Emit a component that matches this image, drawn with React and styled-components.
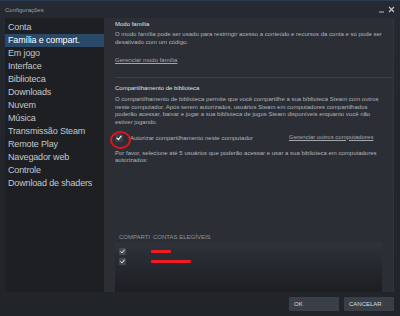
import React from 'react';
import styled, { createGlobalStyle } from 'styled-components';

const GlobalStyle = createGlobalStyle`
  html, body {
    margin: 0;
    padding: 0;
    background: #202328;
  }
  * {
    box-sizing: border-box;
  }
`;

const menu = [
    'Conta',
    'Família e compart.',
    'Em jogo',
    'Interface',
    'Biblioteca',
    'Downloads',
    'Nuvem',
    'Música',
    'Transmissão Steam',
    'Remote Play',
    'Navegador web',
    'Controle',
    'Download de shaders',
];

const accounts = [
    { id: 1, width: 20 },
    { id: 2, width: 40 },
];

const Check = ({ size = 6 }) => (
    <svg width={size} height={size} viewBox="0 0 10 10">
        <path d="M1.5 5.2 L4 7.8 L8.6 2" fill="none" stroke="#f2f2f2" strokeWidth="2" strokeLinecap="round" strokeLinejoin="round" />
    </svg>
);

const App = () => {
    return (
        <>
            <GlobalStyle />
            <Window>
                <TitleBar>
                    <Title>Configurações</Title>
                    <Controls>
                        <svg width="7" height="7" viewBox="0 0 7 7">
                            <path d="M1 6 H6" stroke="#b9bdc2" strokeWidth="1" />
                        </svg>
                        <svg width="7" height="7" viewBox="0 0 7 7">
                            <path d="M1 1 L6 6 M6 1 L1 6" stroke="#c4c8cc" strokeWidth="1.1" />
                        </svg>
                    </Controls>
                </TitleBar>
                <Body>
                    <Sidebar>
                        {menu.map((label, i) => (
                            <NavItem key={label} $active={i === 1}>{label}</NavItem>
                        ))}
                    </Sidebar>
                    <Content>
                        <Heading>Modo família</Heading>
                        <Paragraph $top={3}>
                            O modo família pode ser usado para restringir acesso a conteúdo e recursos da conta e só pode ser<br />
                            desativado com um código.
                        </Paragraph>
                        <LinkText $top={10}>Gerenciar modo família</LinkText>
                        <Divider />
                        <Heading $top={6}>Compartilhamento de biblioteca</Heading>
                        <Paragraph $top={4}>
                            O compartilhamento de biblioteca permite que você compartilhe a sua biblioteca Steam com outros<br />
                            neste computador. Após serem autorizados, usuários Steam em computadores compartilhados<br />
                            poderão acessar, baixar e jogar a sua biblioteca de jogos Steam disponíveis enquanto você não<br />
                            estiver jogando.
                        </Paragraph>
                        <AuthRow>
                            <Marked>
                                <CheckBox $size={8}><Check size={6} /></CheckBox>
                            </Marked>
                            <AuthLabel>Autorizar compartilhamento neste computador</AuthLabel>
                            <LinkText>Gerenciar outros computadores</LinkText>
                        </AuthRow>
                        <Paragraph $top={7}>
                            Por favor, selecione até 5 usuários que poderão acessar e usar a sua biblioteca em computadores<br />
                            autorizados:
                        </Paragraph>
                        <Spacer />
                        <ListHeader>
                            <ColShare $w={34}>Comparti</ColShare>
                            <span>Contas elegíveis</span>
                        </ListHeader>
                        <ListBox>
                            {accounts.map((acc) => (
                                <ListRow key={acc.id}>
                                    <ColShare $w={32}>
                                        <CheckBox $size={7} $light><Check size={5} /></CheckBox>
                                    </ColShare>
                                    <Redacted style={{ width: acc.width }} />
                                </ListRow>
                            ))}
                        </ListBox>
                    </Content>
                </Body>
                <Footer>
                    <Button>OK</Button>
                    <Button>CANCELAR</Button>
                </Footer>
            </Window>
        </>
    );
};

const Window = styled.div`
  width: 400px;
  height: 316px;
  display: flex;
  flex-direction: column;
  background: linear-gradient(180deg, #252a33 0%, #23262c 30%, #212428 100%);
  border-top: 1px solid #2a3a52;
  font-family: "Liberation Sans", Arial, sans-serif;
  overflow: hidden;
`;

const TitleBar = styled.div`
  height: 17px;
  display: flex;
  align-items: center;
  justify-content: space-between;
  padding: 0 5px 0 5px;
`;

const Title = styled.span`
  font-size: 6px;
  color: #9ca0a6;
`;

const Controls = styled.div`
  display: flex;
  align-items: center;
  gap: 3px;
`;

const Body = styled.div`
  height: 274px;
  display: flex;
  padding: 0 6px 0 5px;
`;

const Sidebar = styled.div`
  width: 99px;
  background: #1d1f23;
  padding-top: 3px;
  display: flex;
  flex-direction: column;
`;

const NavItem = styled.div`
  height: 13px;
  line-height: 13px;
  padding-left: 3px;
  font-size: 9px;
  letter-spacing: -0.15px;
  color: ${(p) => (p.$active ? '#ffffff' : '#c3c7cc')};
  background: ${(p) => (p.$active ? '#2a4868' : 'transparent')};
  white-space: nowrap;
`;

const Content = styled.div`
  flex: 1;
  display: flex;
  flex-direction: column;
  padding: 2px 11px 0 11px;
  background: #2b2e35;
  border-right: 1px solid #30343b;
`;

const Heading = styled.div`
  font-size: 6px;
  line-height: 8px;
  color: #dfe2e5;
  margin-top: ${(p) => p.$top || 0}px;
`;

const Paragraph = styled.div`
  font-size: 6px;
  line-height: 7.6px;
  color: #b0b4b9;
  margin-top: ${(p) => p.$top || 0}px;
  white-space: nowrap;
`;

const LinkText = styled.span`
  font-size: 6px;
  line-height: 8px;
  color: #a4a8ad;
  text-decoration: underline;
  margin-top: ${(p) => p.$top || 0}px;
  align-self: flex-start;
`;

const Divider = styled.div`
  height: 1px;
  background: #3b3f46;
  margin: 13px -11px 0 0;
`;

const AuthRow = styled.div`
  margin-top: 6px;
  height: 10px;
  display: flex;
  align-items: center;
`;

const Marked = styled.span`
  position: relative;
  display: flex;
  width: 8px;
  height: 8px;
  &::after {
    content: '';
    position: absolute;
    left: -5px;
    top: -3px;
    width: 17px;
    height: 14px;
    border: 2px solid #e3141d;
    border-radius: 50%;
  }
`;

const CheckBox = styled.span`
  width: ${(p) => p.$size}px;
  height: ${(p) => p.$size}px;
  background: ${(p) => (p.$light ? '#464b53' : '#3c4047')};
  border-radius: 1px;
  display: flex;
  align-items: center;
  justify-content: center;
`;

const AuthLabel = styled.span`
  font-size: 6px;
  color: #b0b4b9;
  margin-left: 7px;
  width: 159px;
`;

const Spacer = styled.div`
  flex: 1;
`;

const ListHeader = styled.div`
  display: flex;
  font-size: 6px;
  line-height: 8px;
  text-transform: uppercase;
  color: #8e949b;
  padding-left: 4px;
  margin-bottom: 2px;
`;

const ColShare = styled.span`
  width: ${(p) => p.$w}px;
  display: flex;
  align-items: center;
  white-space: nowrap;
`;

const ListBox = styled.div`
  height: 49px;
  padding: 3px 0 0 4px;
  background: linear-gradient(180deg, #2f333a 0%, #25282e 45%, #1c1e22 100%);
`;

const ListRow = styled.div`
  height: 10px;
  display: flex;
  align-items: center;
`;

const Redacted = styled.span`
  height: 3px;
  border-radius: 1px;
  background: #ee1c25;
`;

const Footer = styled.div`
  flex: 1;
  display: flex;
  justify-content: flex-end;
  align-items: center;
  gap: 5px;
  padding-right: 6px;
`;

const Button = styled.button`
  width: 50px;
  height: 14px;
  border: none;
  border-radius: 1px;
  padding: 0 0 0 5px;
  text-align: left;
  font-family: "Liberation Sans", Arial, sans-serif;
  font-size: 6px;
  color: #d9dcdf;
  background: #3a3f47;
`;

export default App;
